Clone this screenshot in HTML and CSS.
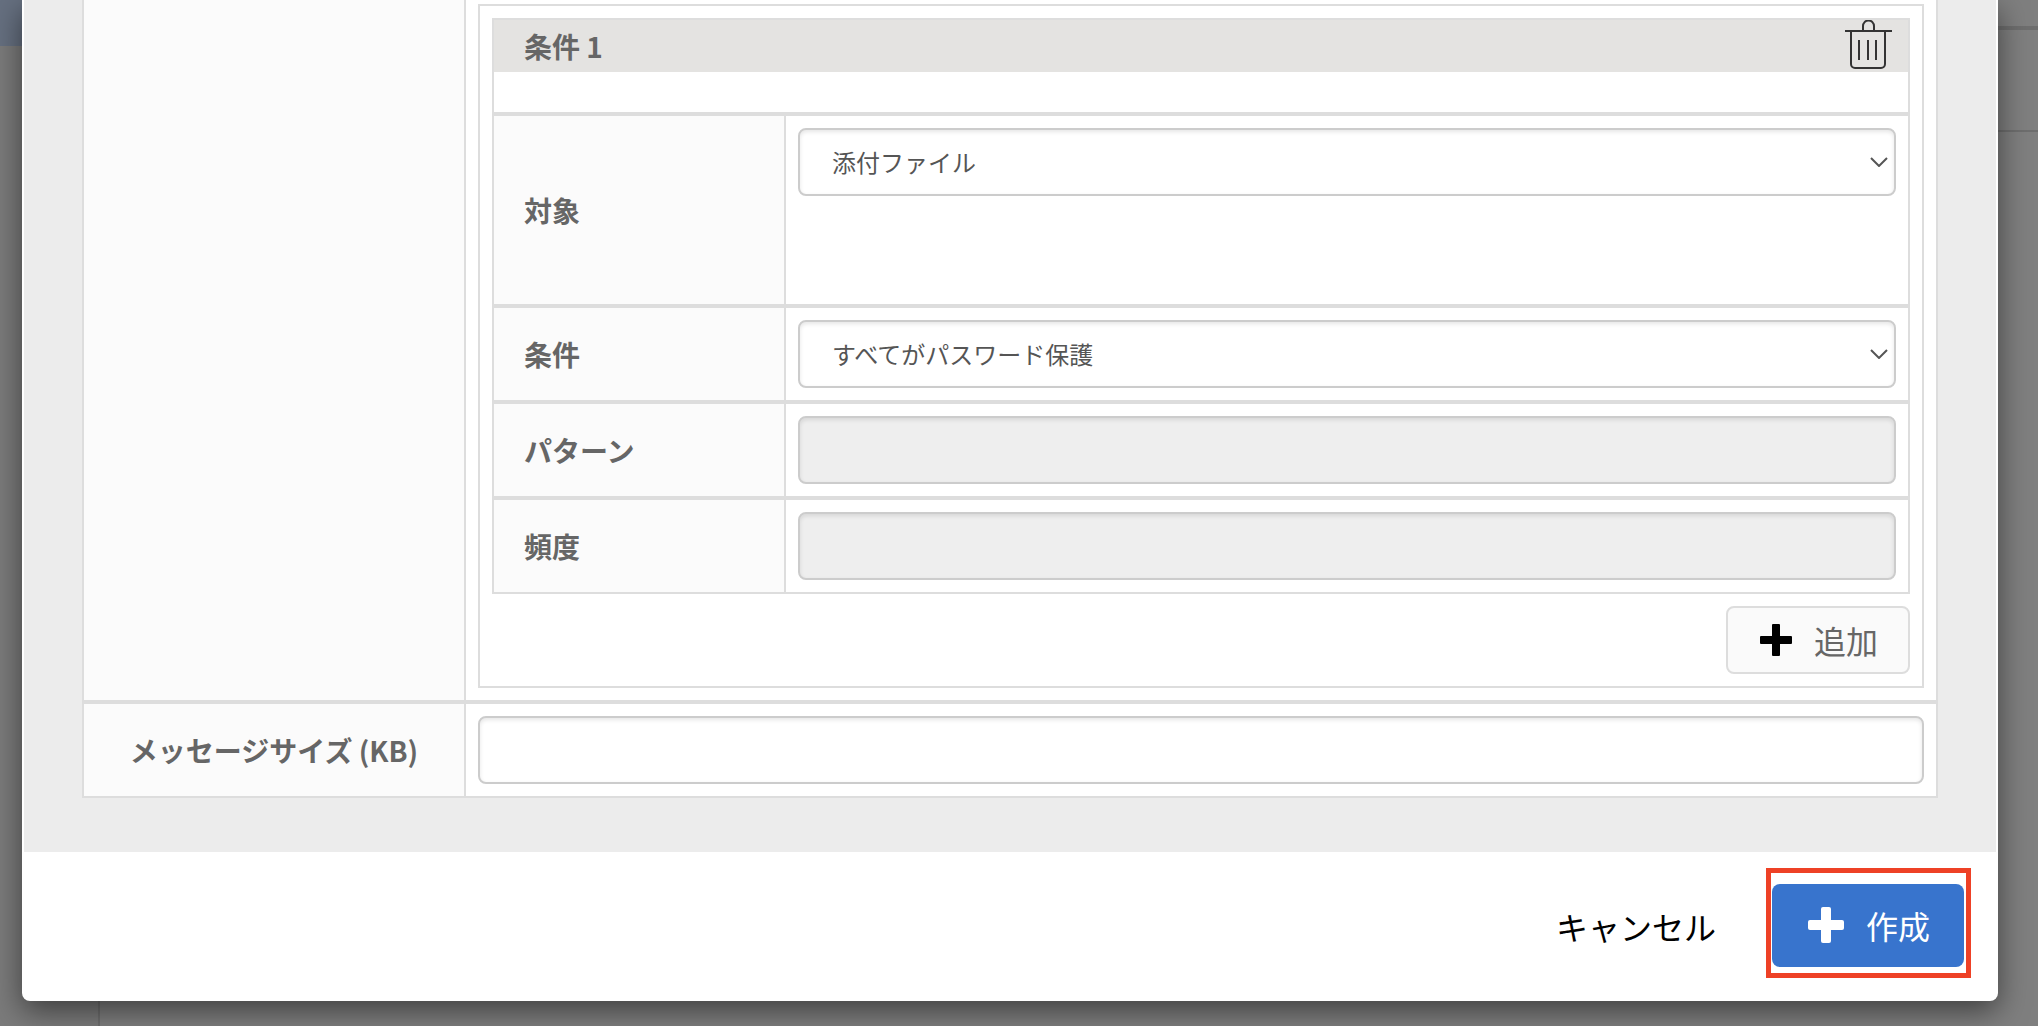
FILE: index.html
```html
<!DOCTYPE html>
<html lang="ja">
<head>
    <meta charset="UTF-8">
    <meta name="viewport" content="width=device-width, initial-scale=1.0">
    <title>作成</title>
    <link rel="stylesheet" href="styles.css">
</head>
<body>
    <!-- page behind the dialog -->
    <div class="backdrop">
        <div class="sidebar">
            <div class="sidebar-active"></div>
        </div>
        <div class="page">
            <div class="page-top"></div>
            <div class="page-panel"></div>
        </div>
    </div>

    <form class="modal" role="dialog">
        <div class="modal-body">
            <div class="table">
                <div class="row outer-row">
                    <div class="label"></div>
                    <div class="cell cell-scrolled">
                        <div class="conditions">
                            <div class="table">
                                <div class="condition-head">
                                    <h3 class="condition-title">条件 1</h3>
                                    <button type="button" class="trash" aria-label="削除">
                                        <svg width="48" height="50" viewBox="0 0 48 50" fill="none" stroke="#333" stroke-width="2">
                                            <path d="M0 11H47"/>
                                            <path d="M18 11V6a5 5 0 0 1 11 0v5"/>
                                            <path d="M6 12V44a4 4 0 0 0 4 4H36a4 4 0 0 0 4-4V12"/>
                                            <path d="M14 20V40M23 20V40M31 20V40"/>
                                        </svg>
                                    </button>
                                </div>
                                <div class="row inner-row target-row">
                                    <label class="label" for="target">対象</label>
                                    <div class="cell">
                                        <div class="select">
                                            <select class="field" id="target">
                                                <option>添付ファイル</option>
                                            </select>
                                            <svg class="chevron" width="18" height="10" viewBox="0 0 18 10" fill="none" stroke="#555" stroke-width="2"><path d="M1 1L9 9L17 1"/></svg>
                                        </div>
                                    </div>
                                </div>
                                <div class="row inner-row">
                                    <label class="label" for="condition">条件</label>
                                    <div class="cell">
                                        <div class="select">
                                            <select class="field" id="condition">
                                                <option>すべてがパスワード保護</option>
                                            </select>
                                            <svg class="chevron" width="18" height="10" viewBox="0 0 18 10" fill="none" stroke="#555" stroke-width="2"><path d="M1 1L9 9L17 1"/></svg>
                                        </div>
                                    </div>
                                </div>
                                <div class="row inner-row">
                                    <label class="label" for="pattern">パターン</label>
                                    <div class="cell"><input class="field" type="text" id="pattern" disabled></div>
                                </div>
                                <div class="row inner-row">
                                    <label class="label" for="frequency">頻度</label>
                                    <div class="cell"><input class="field" type="text" id="frequency" disabled></div>
                                </div>
                            </div>
                            <button type="button" class="add">
                                <svg width="32" height="32" viewBox="0 0 32 32" fill="#000">
                                    <rect x="12" y="0" width="8" height="32" rx="1"/>
                                    <rect x="0" y="12" width="32" height="8" rx="1"/>
                                </svg>
                                追加
                            </button>
                        </div>
                    </div>
                </div>
                <div class="row outer-row">
                    <label class="label" for="size">メッセージサイズ (KB)</label>
                    <div class="cell"><input class="field" type="text" id="size"></div>
                </div>
            </div>
        </div>
        <div class="modal-footer">
            <button type="button" class="cancel">キャンセル</button>
            <div class="highlight">
                <button type="submit" class="create">
                    <svg width="36" height="36" viewBox="0 0 36 36" fill="#fff">
                        <rect x="13" y="0" width="10" height="36" rx="2"/>
                        <rect x="0" y="13" width="36" height="10" rx="2"/>
                    </svg>
                    作成
                </button>
            </div>
        </div>
    </form>
</body>
</html>
```

FILE: styles.css
```css
* {
    box-sizing: border-box;
}
body {
    margin: 0;
    min-height: 100vh;
    overflow: hidden;
    background: #7f7f7f;
    color: #666;
    font-family: "Noto Sans CJK JP", sans-serif;
    font-size: 28px;
}
button, input, select {
    font-family: inherit;
}

/* page behind */
.backdrop {
    position: absolute;
    inset: 0;
    display: grid;
    grid-template-columns: 100px 1fr;
}
.sidebar {
    background: #7b7b7b;
    border-right: 2px solid #6e6e6e;
}
.sidebar-active {
    height: 46px;
    background: #667080;
}
.page-top {
    height: 30px;
    border-bottom: 4px solid #6e6e6e;
}
.page-panel {
    height: 102px;
    border-bottom: 2px solid #6e6e6e;
}

/* dialog */
.modal {
    position: relative;
    margin: 0 40px 0 22px;
    background: #fff;
    border-radius: 0 0 8px 8px;
    box-shadow: 0 10px 30px rgba(0, 0, 0, 0.5);
}
.modal-body {
    margin: 0 2px;
    padding: 0 58px 54px;
    background: #ececec;
}
.table {
    border: 2px solid #ddd;
    background: #fff;
}
.modal-body > .table {
    border-top: none;
}
.row {
    display: grid;
}
.outer-row {
    grid-template-columns: 382px 1fr;
}
.outer-row + .outer-row,
.inner-row {
    border-top: 4px solid #ddd;
}
.inner-row {
    grid-template-columns: 292px 1fr;
}
.target-row {
    min-height: 192px;
}
.label {
    display: flex;
    align-items: center;
    justify-content: center;
    background: #fbfbfb;
    border-right: 2px solid #ddd;
    font-weight: bold;
}
.inner-row .label {
    justify-content: flex-start;
    padding-left: 30px;
}
.cell {
    min-width: 0;
    padding: 12px;
}
.cell-scrolled {
    padding-top: 4px;
}
.conditions {
    display: flex;
    flex-direction: column;
    gap: 12px;
    padding: 12px;
    border: 2px solid #ddd;
}
.condition-head {
    display: flex;
    justify-content: space-between;
    align-items: flex-start;
    height: 52px;
    margin-bottom: 40px;
    padding: 0 15px 0 30px;
    background: #e4e3e1;
}
.condition-title {
    margin: 0;
    font-size: 28px;
    line-height: 52px;
}
.trash {
    padding: 0;
    border: none;
    background: none;
    cursor: pointer;
}
.trash svg {
    display: block;
}

/* fields */
.field {
    display: block;
    width: 100%;
    height: 68px;
    padding: 0 32px 2px;
    border: 2px solid #ccc;
    border-radius: 8px;
    background: #fff;
    box-shadow: inset 0 2px 4px rgba(0, 0, 0, 0.1);
    color: #555;
    font-size: 24px;
    appearance: none;
}
.field:disabled {
    background: #eee;
}
.select {
    position: relative;
}
.chevron {
    position: absolute;
    top: 29px;
    right: 8px;
    pointer-events: none;
}

/* buttons */
.add, .create {
    display: flex;
    align-items: center;
    font-size: 32px;
    border-radius: 8px;
    cursor: pointer;
}
.add {
    align-self: flex-end;
    gap: 22px;
    height: 68px;
    padding: 0 30px 0 32px;
    border: 2px solid #ddd;
    background: #fafafa;
    color: #666;
}
.modal-footer {
    display: flex;
    justify-content: flex-end;
    align-items: center;
    gap: 50px;
    padding: 16px 27px 23px;
}
.cancel {
    padding: 6px 0 0;
    border: none;
    background: none;
    color: #000;
    font-size: 32px;
    cursor: pointer;
}
.highlight {
    padding: 11px 2px 6px 1px;
    border: 5px solid #ee4126;
}
.create {
    gap: 22px;
    height: 83px;
    padding: 0 34px 2px 36px;
    border: none;
    background: #3874cd;
    color: #fff;
}
```
